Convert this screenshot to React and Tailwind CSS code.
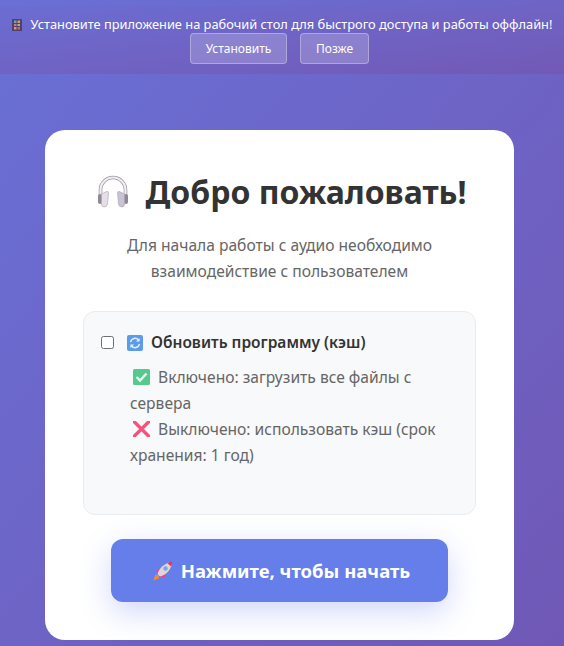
const FONT = "font-['Noto_Sans','Open_Sans',sans-serif]";

function FilmIcon() {
  return (
    <svg width="10" height="12" viewBox="0 0 10 12" className="shrink-0">
      <rect width="10" height="12" rx="0.5" fill="#4f4170" />
      <rect x="2" y="1.5" width="2.5" height="2.5" fill="#5fa6c9" />
      <rect x="5.5" y="1.5" width="2.5" height="2.5" fill="#d9a04f" />
      <rect x="2" y="5" width="2.5" height="2" fill="#e0785a" />
      <rect x="5.5" y="5" width="2.5" height="2" fill="#9ac27a" />
      <rect x="2" y="8" width="2.5" height="2.5" fill="#d9a04f" />
      <rect x="5.5" y="8" width="2.5" height="2.5" fill="#d0607a" />
    </svg>
  );
}

function HeadphonesIcon() {
  return (
    <svg width="32" height="33" viewBox="0 0 32 33" className="shrink-0">
      <path d="M3.5 21 V15 a12.5 12.5 0 0 1 25 0 V21" fill="none" stroke="#9a95a0" strokeWidth="3.6" />
      <path d="M3.5 21 V15 a12.5 12.5 0 0 1 25 0 V21" fill="none" stroke="#f0edf2" strokeWidth="2.2" />
      <rect x="1" y="19" width="4" height="10" rx="2" fill="#8d8893" />
      <rect x="27" y="19" width="4" height="10" rx="2" fill="#8d8893" />
      <path d="M4.5 19 L9.5 16.5 Q11.5 16 11.5 18 L10.5 29 Q10 32 7 32 Q4.5 32 4.5 29 Z" fill="#e4dfe9" stroke="#a8a2b0" strokeWidth="0.6" />
      <path d="M27.5 19 L22.5 16.5 Q20.5 16 20.5 18 L21.5 29 Q22 32 25 32 Q27.5 32 27.5 29 Z" fill="#c9c2d2" stroke="#a8a2b0" strokeWidth="0.6" />
    </svg>
  );
}

function RefreshIcon() {
  return (
    <svg width="16" height="16" viewBox="0 0 16 16" className="shrink-0">
      <rect width="16" height="16" rx="2" fill="#5a9bea" />
      <path d="M3.5 7 A4.6 4.6 0 0 1 11.5 5" fill="none" stroke="#e8f1fb" strokeWidth="1.5" />
      <path d="M12.6 3 V6.6 H9 Z" fill="#e8f1fb" />
      <path d="M12.5 9 A4.6 4.6 0 0 1 4.5 11" fill="none" stroke="#e8f1fb" strokeWidth="1.5" />
      <path d="M3.4 13 V9.4 H7 Z" fill="#e8f1fb" />
    </svg>
  );
}

function CheckIcon() {
  return (
    <svg width="17" height="16" viewBox="0 0 17 16" className="inline-block align-[-2px]">
      <rect width="17" height="16" rx="1.5" fill="#55c98e" />
      <path d="M3.5 8 L7 11.5 L13.5 4.5" fill="none" stroke="#e8f8ef" strokeWidth="2.4" />
    </svg>
  );
}

function CrossIcon() {
  return (
    <svg width="17" height="16" viewBox="0 0 17 16" className="inline-block align-[-2px]">
      <path d="M1.5 1 L15.5 15 M15.5 1 L1.5 15" stroke="#f4537e" strokeWidth="3.4" strokeLinecap="round" />
    </svg>
  );
}

function RocketIcon() {
  return (
    <svg width="20" height="20" viewBox="0 0 20 20" className="shrink-0">
      <path d="M2 14 L5.5 14 L6 17.5 L0.5 19.5 Z" fill="#f08a3c" />
      <path d="M3.5 9 L8.5 7.5 L5 14 Z" fill="#f0437f" />
      <path d="M11.5 16.5 L12.5 11.5 L6 15 Z" fill="#f0437f" />
      <path d="M4.5 13 C6 7 11 3 17 1.2 L19 3 C17.5 9 13 14 7 15.5 Z" fill="#e2d3da" />
      <path d="M14.5 2.2 L18 0.6 L19.4 2 L18 5.5 Z" fill="#ee2f56" />
      <circle cx="12.5" cy="7.5" r="2.2" fill="#68aee0" />
    </svg>
  );
}

export default function App() {
  return (
    <div className={`${FONT} h-[646px] overflow-hidden bg-gradient-to-br from-[#6970d6] to-[#7058b6] pt-[6px]`}>
      {/* Install banner */}
      <div className="h-[68px] bg-gradient-to-br from-[#6b6dd2] to-[#7259b6] pt-[10px] text-white">
        <div className="flex h-[17px] items-center justify-center gap-[9px] text-[12.83px] leading-[17px] whitespace-nowrap">
          <FilmIcon />
          <span>Установите приложение на рабочий стол для быстрого доступа и работы оффлайн!</span>
        </div>
        <div className="flex justify-center gap-[13px] pr-[5px]">
          <button className="h-[31px] w-[97px] rounded-[4px] border border-white/30 bg-white/20 text-[12px] text-white">
            Установить
          </button>
          <button className="h-[31px] w-[69px] rounded-[4px] border border-white/30 bg-white/20 text-[12px] text-white">
            Позже
          </button>
        </div>
      </div>

      {/* Card */}
      <div className="ml-[45px] mt-[56px] h-[510px] w-[469px] rounded-[20px] bg-white px-[38px] pt-[39px] text-center">
        <h1 className="flex h-[45px] items-center justify-center gap-[16px] pl-[5px] text-[32px] font-bold whitespace-nowrap text-[#333]">
          <HeadphonesIcon />
          <span>Добро пожаловать!</span>
        </h1>
        <p className="mt-[18px] text-[15.6px] leading-[26px] text-[#666]">
          Для начала работы с аудио необходимо
          <br />
          взаимодействие с пользователем
        </p>

        <div className="mt-[27px] h-[204px] rounded-[12px] border border-[#e9ecef] bg-[#f8f9fa] pl-[17px] pr-[20px] pt-[18px] text-left">
          <label className="flex h-[26px] items-center">
            <input
              type="checkbox"
              className="m-0 mb-[2px] h-[13px] w-[13px] shrink-0 appearance-none rounded-[2.5px] border border-[#6f6f6f] bg-white"
            />
            <span className="ml-[13px]">
              <RefreshIcon />
            </span>
            <span className="ml-[8px] text-[15.5px] font-semibold text-[#333]">Обновить программу (кэш)</span>
          </label>
          <div className="mt-[8px] pl-[29px] text-[15.6px] leading-[26px] text-[#666]">
            <div>
              <span className="ml-[3px] mr-[8px]"><CheckIcon /></span>
              Включено: загрузить все файлы с сервера
            </div>
            <div>
              <span className="ml-[3px] mr-[8px]"><CrossIcon /></span>
              Выключено: использовать кэш (срок хранения: 1 год)
            </div>
          </div>
        </div>

        <button className="mx-auto mt-[24px] flex h-[63px] w-[337px] items-center justify-center gap-[8px] rounded-[12px] bg-[#667eea] pl-[4px] text-[18.5px] font-bold text-white shadow-[0_10px_30px_rgba(102,126,234,0.3)]">
          <RocketIcon />
          <span>Нажмите, чтобы начать</span>
        </button>
      </div>
    </div>
  );
}
